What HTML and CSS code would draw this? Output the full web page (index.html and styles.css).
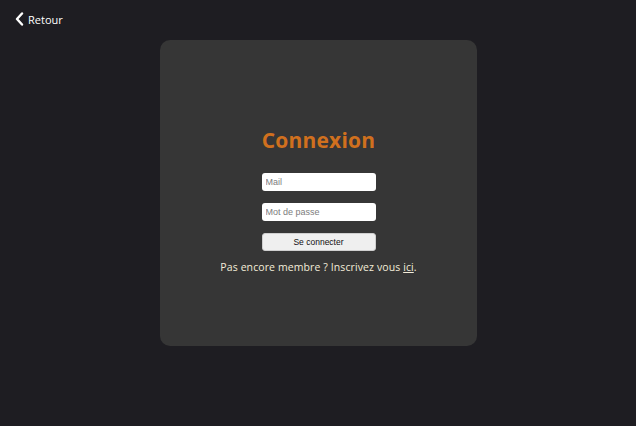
FILE: index.html
```html
<!DOCTYPE html>
<html lang="fr">
<head>
<meta charset="utf-8">
<title>Connexion</title>
<link rel="stylesheet" href="styles.css">
</head>
<body>
<header class="top">
  <a class="back" href="#">
    <svg class="back-icon" width="9" height="14" viewBox="0 0 9 14"><path d="M7 1.5 L2 7 L7 12.5" fill="none" stroke="#ffffff" stroke-width="2.4" stroke-linecap="round" stroke-linejoin="round"/></svg>
    <span>Retour</span>
  </a>
</header>
<main class="card">
  <h1 class="title">Connexion</h1>
  <form class="form">
    <input class="field" type="email" placeholder="Mail">
    <input class="field" type="password" placeholder="Mot de passe">
    <button class="btn" type="button">Se connecter</button>
  </form>
  <p class="signup">Pas encore membre ? Inscrivez vous <a href="#">ici</a>.</p>
</main>
</body>
</html>
```
FILE: styles.css
```css
html, body {
  margin: 0;
  padding: 0;
  background: #1e1d22;
  height: 100%;
}
body {
  font-family: "Open Sans", "Inter", sans-serif;
  color: #ffffff;
}
.top {
  height: 40px;
  padding-left: 15px;
  display: flex;
  align-items: center;
}
.back {
  display: flex;
  align-items: center;
  gap: 4px;
  color: #ffffff;
  text-decoration: none;
  font-size: 11px;
  font-weight: 500;
  margin-top: -2px;
}
.back-icon {
  display: block;
}
.card {
  width: 317px;
  height: 306px;
  margin: 0 auto;
  box-sizing: border-box;
  background: #363636;
  border-radius: 10px;
  display: flex;
  flex-direction: column;
  align-items: center;
  padding-top: 83px;
  padding-left: 1px;
}
.title {
  margin: 0;
  font-size: 21px;
  line-height: 34px;
  font-weight: 700;
  color: #d0701e;
  letter-spacing: 0.2px;
}
.form {
  margin-top: 16px;
  display: flex;
  flex-direction: column;
  align-items: center;
  gap: 12px;
}
.field {
  width: 114px;
  height: 18px;
  box-sizing: border-box;
  border: none;
  border-radius: 3px;
  background: #ffffff;
  padding: 0 4px;
  font-family: "Liberation Sans", Arial, sans-serif;
  font-size: 9px;
  color: #333;
  outline: none;
}
.field::placeholder {
  color: #7d7d7d;
}
.btn {
  width: 114px;
  height: 18px;
  box-sizing: border-box;
  border: 1px solid #cfcfcf;
  border-radius: 3px;
  background: #efefef;
  font-family: "Liberation Sans", Arial, sans-serif;
  font-size: 8.5px;
  color: #111;
  padding: 0;
}
.signup {
  margin: 8px 0 0;
  font-size: 10.5px;
  line-height: 16px;
  font-weight: 500;
  letter-spacing: 0.1px;
  color: #f3ecd9;
}
.signup a {
  color: #f3ecd9;
  text-decoration: underline;
}
```
